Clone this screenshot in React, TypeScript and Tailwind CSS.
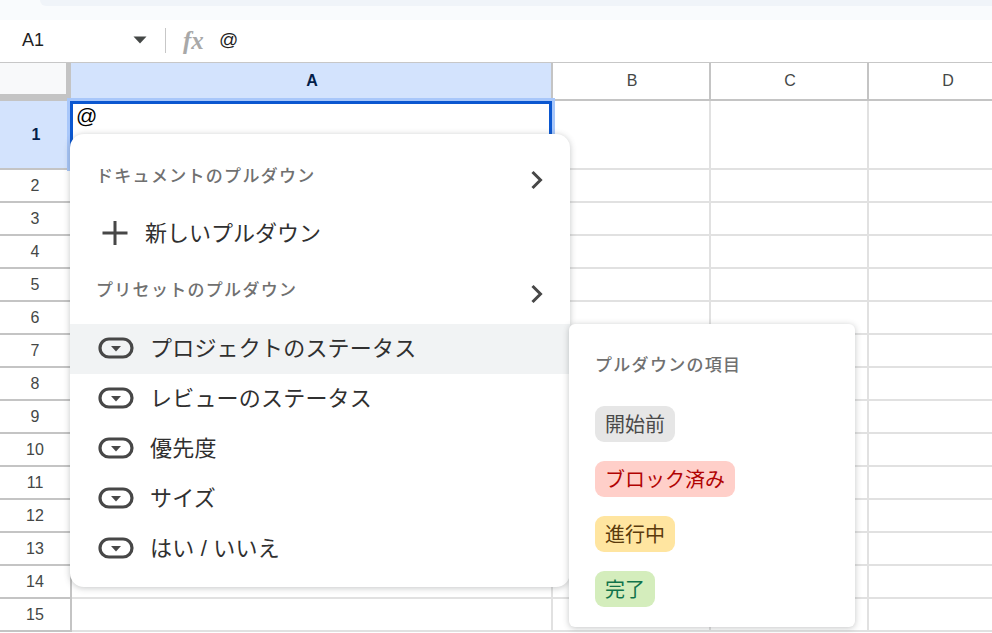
const rowNumbers = [2, 3, 4, 5, 6, 7, 8, 9, 10, 11, 12, 13, 14, 15];
const presets = ["プロジェクトのステータス", "レビューのステータス", "優先度", "サイズ", "はい / いいえ"];
const chips = [
  { label: "開始前", cls: "bg-[#e6e6e6] text-[#4a4a4a]" },
  { label: "ブロック済み", cls: "bg-[#ffcfc9] text-[#b10202]" },
  { label: "進行中", cls: "bg-[#ffe5a0] text-[#5a3a0c]" },
  { label: "完了", cls: "bg-[#d4edbc] text-[#11734b]" },
];

function ChipIcon() {
  return (
    <svg width="36" height="22" viewBox="0 0 36 22" className="shrink-0">
      <rect x="2" y="2" width="32" height="18" rx="9" fill="none" stroke="#474747" strokeWidth="3.2" />
      <path d="M13 9h10L18 14.5z" fill="#474747" />
    </svg>
  );
}

function Chevron() {
  return (
    <svg width="16" height="20" viewBox="0 0 16 20" className="mt-[6px]">
      <path d="M3.5 2L11.5 10l-8 8" fill="none" stroke="#474747" strokeWidth="3" />
    </svg>
  );
}

function SectionHeading({ label, className }: { label: string; className: string }) {
  return (
    <div className={`flex items-center justify-between pl-[26px] pr-[25px] ${className}`}>
      <span className="text-[17px] font-medium tracking-[1.3px] text-[#707070]">{label}</span>
      <Chevron />
    </div>
  );
}

export default function App() {
  return (
    <div
      className="relative h-[633px] w-[992px] overflow-hidden bg-white"
      style={{ fontFamily: '"Liberation Sans", "Noto Sans CJK JP", sans-serif' }}
    >
      {/* top chrome */}
      <div className="h-[20px] bg-[#f9fbfd] pl-[40px]">
        <div className="h-[6px] rounded-bl-[6px] bg-[#f0f4f9]" />
      </div>

      {/* formula bar */}
      <div className="flex h-[43px] items-center border-b border-[#c7c7c7] pb-[2px]">
        <span className="ml-[22px] w-[111px] text-[18px] text-[#1f1f1f]">A1</span>
        <svg width="14" height="8" viewBox="0 0 14 8">
          <path d="M0.5 0.5h13L7 7.5z" fill="#444746" />
        </svg>
        <div className="ml-[18px] h-[25px] w-px bg-[#c7c7c7]" />
        <span
          className="ml-[17px] w-[36px] text-[25px] font-bold italic leading-none text-[#a8a8a8]"
          style={{ fontFamily: '"Liberation Serif", serif' }}
        >
          fx
        </span>
        <span className="text-[19px] text-[#1f1f1f]">@</span>
      </div>

      {/* column headers */}
      <div className="flex h-[38px] border-b-2 border-[#c4c4c4] text-[16px] text-[#444746]">
        <div className="w-[71px] shrink-0 border-r-[5px] border-b-[5px] border-[#c4c4c4] bg-[#f8f9fa]" />
        <div className="flex w-[480px] shrink-0 items-center justify-center bg-[#d3e3fd] pl-[2px] font-bold text-[#041e49]">A</div>
        <div className="flex w-[158px] shrink-0 items-center justify-center border-l-2 border-[#c4c4c4] pl-[2px]">B</div>
        <div className="flex w-[158px] shrink-0 items-center justify-center border-l-2 border-[#c4c4c4] pl-[2px]">C</div>
        <div className="flex w-[158px] shrink-0 items-center justify-center border-l-2 border-[#c4c4c4] pl-[2px]">D</div>
      </div>

      {/* row 1 */}
      <div className="flex h-[69px] border-b-2 border-[#e1e1e1]">
        <div className="-mb-[2px] flex w-[70px] shrink-0 items-center justify-center border-b-2 border-[#c4c4c4] bg-[#d3e3fd] pl-[2px] text-[16px] font-bold text-[#041e49]">1</div>
        <div className="w-[482px] shrink-0 border-[3px] border-[#0b57d0] pl-[3px] text-[21px] leading-[24px] text-[#000000] outline-[3px] outline-[#a8c7fa]">@</div>
        <div className="w-[157px] shrink-0" />
        <div className="w-[158px] shrink-0 border-l-2 border-[#e1e1e1]" />
        <div className="w-[158px] shrink-0 border-l-2 border-[#e1e1e1]" />
      </div>

      {/* remaining rows */}
      {rowNumbers.map((n) => (
        <div key={n} className="flex h-[33px] border-b-2 border-[#e1e1e1]">
          <div className="-mb-[2px] flex w-[72px] shrink-0 items-center justify-center border-r-2 border-b-2 border-[#c4c4c4] text-[16px] text-[#444746]">{n}</div>
          <div className="w-[479px] shrink-0" />
          <div className="w-[158px] shrink-0 border-l-2 border-[#e1e1e1]" />
          <div className="w-[158px] shrink-0 border-l-2 border-[#e1e1e1]" />
          <div className="w-[158px] shrink-0 border-l-2 border-[#e1e1e1]" />
        </div>
      ))}

      {/* dropdown menu */}
      <div className="absolute left-[70px] top-[134px] flex h-[453px] w-[500px] flex-col rounded-[14px] bg-white shadow-[0_1px_6px_rgba(60,64,67,0.3)]">
        <SectionHeading label="ドキュメントのプルダウン" className="mt-[31px] h-[24px]" />
        <div className="mt-[19px] flex h-[50px] items-center pl-[32px] text-[22px] text-[#303030]">
          <svg width="26" height="26" viewBox="0 0 26 26" className="mr-[17px] shrink-0">
            <path d="M13 1v24M0.5 13h25" fill="none" stroke="#474747" strokeWidth="3" />
          </svg>
          新しいプルダウン
        </div>
        <SectionHeading label="プリセットのプルダウン" className="mt-[21px] h-[24px]" />
        <div className="mt-[21px] flex flex-col">
          {presets.map((name, i) => (
            <div
              key={name}
              className={`flex h-[50px] items-center gap-[16px] pb-[2px] pl-[28px] text-[22px] tracking-[0.2px] text-[#303030] ${i === 0 ? "bg-[#f1f3f4]" : ""}`}
            >
              <ChipIcon />
              {name}
            </div>
          ))}
        </div>
      </div>

      {/* preview of items */}
      <div className="absolute left-[569px] top-[324px] flex h-[303px] w-[286px] flex-col items-start rounded-[6px] bg-white pl-[26px] shadow-[0_1px_6px_rgba(60,64,67,0.3)]">
        <span className="mt-[30px] h-[24px] text-[17px] font-medium leading-[24px] tracking-[1.3px] text-[#707070]">プルダウンの項目</span>
        <div className="mt-[28px] flex flex-col items-start gap-[19px]">
          {chips.map((chip) => (
            <span key={chip.label} className={`flex h-[36px] items-center rounded-[9px] px-[10px] pt-[1px] text-[20px] ${chip.cls}`}>
              {chip.label}
            </span>
          ))}
        </div>
      </div>
    </div>
  );
}
